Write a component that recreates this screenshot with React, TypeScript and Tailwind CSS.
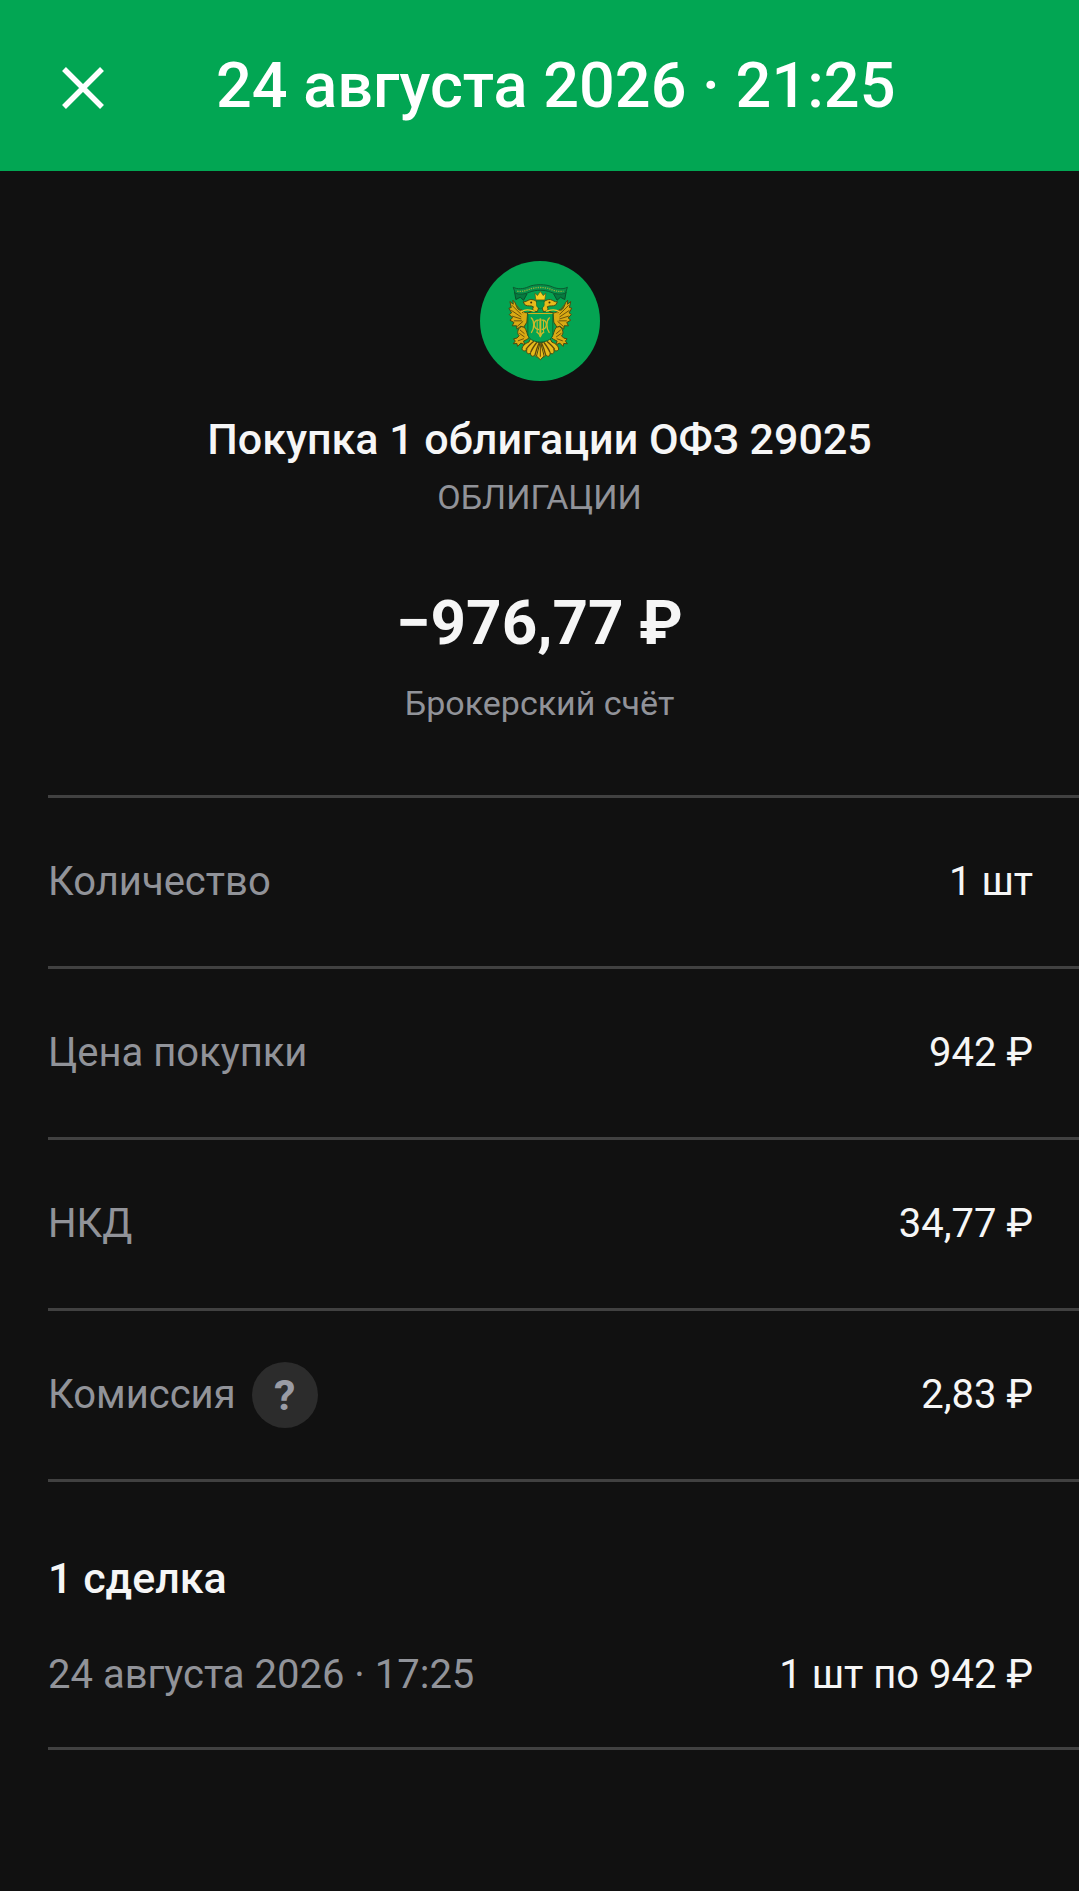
import { ReactNode } from "react";

const details = [
  { label: "Количество", value: "1 шт" },
  { label: "Цена покупки", value: "942 ₽" },
  { label: "НКД", value: "34,77 ₽" },
  { label: "Комиссия", value: "2,83 ₽", hint: true },
];

const CloseIcon = () => (
  <svg viewBox="0 0 42 42" className="size-[42px]" fill="none" aria-hidden="true">
    <path d="M2 2 40 40M40 2 2 40" stroke="currentColor" strokeWidth="5.5" />
  </svg>
);

// one half of the eagle, mirrored for the other side
const EagleHalf = () => (
  <g strokeLinejoin="round" strokeLinecap="round">
    {/* ribbon tail */}
    <path
      d="M131 126 L135 148 L148 141 L158 150 L168 132 Z"
      fill="#067a3f"
      stroke="#0b4f2a"
      strokeWidth="3"
    />
    {/* wing */}
    <path
      d="M181 184 C170 190 160 190 152 178 C144 184 138 174 133 158 L126 150 L127 162 L117 154 L121 172 L114 174 L122 188 L115 193 L125 203 L117 210 L129 217 L124 227 L137 227 L138 237 L150 228 L158 232 L168 216 L170 190 Z"
      fill="#d9aa14"
      stroke="#4a4a10"
      strokeWidth="3"
    />
    <path
      d="M124 166 L150 192 M122 181 L150 200 M124 198 L150 206 M130 212 L152 212 M140 228 L156 214 M136 164 L156 188"
      stroke="#6e520a"
      strokeWidth="3"
      fill="none"
    />
    {/* neck and head */}
    <path
      d="M198 184 C188 184 182 178 188 170 C180 164 172 170 162 164 L157 155 C165 156 170 150 178 148 C192 147 202 156 203 166 C204 174 202 180 198 184 Z"
      fill="#e6bb1b"
      stroke="#4a4a10"
      strokeWidth="3"
    />
    <circle cx="181" cy="157" r="3" fill="#3c3008" />
    <path d="M152 184 C166 174 180 180 190 183" stroke="#f0c828" strokeWidth="4" fill="none" />
    {/* leg and claw */}
    <path
      d="M150 230 C140 236 137 250 145 257 L138 264 L128 266 L133 273 L127 281 L138 280 L140 289 L150 279 L162 284 L158 273 L168 268 L175 263 C168 254 168 240 161 232 Z"
      fill="#d9aa14"
      stroke="#4a4a10"
      strokeWidth="3"
    />
    <path
      d="M148 240 L160 250 M146 250 L160 260 M142 272 L158 266"
      stroke="#6e520a"
      strokeWidth="3"
      fill="none"
    />
    {/* tail feathers */}
    <path
      d="M206 278 C196 278 190 270 180 264 L174 276 C162 280 154 288 153 297 C157 305 165 303 168 298 C165 309 172 315 179 308 C178 319 187 322 192 314 C194 322 200 322 203 316 Z"
      fill="#e6bb1b"
      stroke="#4a4a10"
      strokeWidth="3"
    />
    <path
      d="M188 274 C176 284 170 290 166 297 M197 278 C188 290 183 298 180 306 M204 280 C198 294 195 304 193 313"
      stroke="#5f480a"
      strokeWidth="4"
      fill="none"
    />
  </g>
);

const Emblem = () => (
  <svg
    viewBox="27 32 361 361"
    className="size-[120px]"
    role="img"
    aria-label="Министерство финансов"
  >
    <circle cx="207.5" cy="212.5" r="180.5" fill="#04a452" />
    <EagleHalf />
    <g transform="translate(417 0) scale(-1 1)">
      <EagleHalf />
    </g>
    <path
      d="M208.5 274 L197 318 L208.5 329 L220 318 Z"
      fill="#e6bb1b"
      stroke="#4a4a10"
      strokeWidth="3"
      strokeLinejoin="round"
    />
    <path d="M208.5 282 V320" stroke="#5f480a" strokeWidth="3" />
    {/* ribbon */}
    <path
      d="M127 111 C140 118 158 116 172 110 C190 101 226 101 245 110 C259 116 277 118 290 111 L284 129 C270 134 254 132 240 126 C222 118 194 118 176 126 C162 132 146 134 133 129 Z"
      fill="#07904a"
      stroke="#0b5a30"
      strokeWidth="3"
      strokeLinejoin="round"
    />
    <path
      d="M139 123 C152 125 164 122 176 117 C194 110 222 110 240 117 C252 122 264 125 278 123"
      fill="none"
      stroke="#8fb03a"
      strokeWidth="4"
      strokeDasharray="4 3"
    />
    {/* crown */}
    <path
      d="M195 149 L192 129 L200 136 L204 130 L208.5 124 L213 130 L217 136 L225 129 L222 149 Z"
      fill="#f5cf23"
      stroke="#5a5210"
      strokeWidth="2"
      strokeLinejoin="round"
    />
    <path
      d="M197 152 H220 V164 C220 170 214 174 208.5 176 C202 174 197 170 197 164 Z"
      fill="#069a4b"
      stroke="#0c6a34"
      strokeWidth="2"
    />
    {/* shield */}
    <path
      d="M171 189 H246 V250 C246 266 232 274 208.5 276 C185 274 171 266 171 250 Z"
      fill="#04a452"
      stroke="#0c6a34"
      strokeWidth="3"
    />
    <path d="M173 190 H244" stroke="#d9b51a" strokeWidth="3" strokeLinecap="round" />
    {/* monogram */}
    <g fill="none" stroke="#cdb92a" strokeLinecap="round">
      <path
        d="M181 203 C191 212 191 234 182 247 M236 203 C226 212 226 234 235 247"
        strokeWidth="4"
      />
      <path d="M203 210 C186 208 186 236 203 238 M214 210 C231 208 231 236 214 238" strokeWidth="4" />
      <path d="M208.5 207 V258" strokeWidth="6" />
      <path d="M199 210 V244 M218 210 V244" strokeWidth="3" />
      <path d="M198 246 C202 248 206 252 208.5 258 C211 252 215 248 219 246" strokeWidth="4" />
    </g>
  </svg>
);

const Row = ({
  label,
  value,
  children,
}: {
  label: string;
  value: string;
  children?: ReactNode;
}) => (
  <div className="flex items-center justify-between border-b-3 border-[#414141] h-[171px] pr-[46px]">
    <dt className="flex items-center gap-4 text-[#919399]">
      {label}
      {children}
    </dt>
    <dd>{value}</dd>
  </div>
);

export default function App() {
  return (
    <div className="min-h-screen bg-[#111111] text-[#f6f6f6] font-['Roboto',sans-serif] text-[40px] leading-12">
      <header className="flex items-center h-[171px] pt-1 pl-[62px] bg-[#02a653] text-white">
        <button type="button" aria-label="Закрыть">
          <CloseIcon />
        </button>
        <h1 className="pl-28 pb-1 text-[63px] leading-20 font-medium whitespace-nowrap">
          24 августа 2026 · 21:25
        </h1>
      </header>

      <main>
        <section className="flex flex-col items-center pt-[90px] pb-[70px] text-center">
          <Emblem />
          <h2 className="mt-8 text-[43px] leading-[52px] font-medium">
            Покупка 1 облигации ОФЗ 29025
          </h2>
          <p className="mt-2.5 text-[34px] leading-11 text-[#919399]">ОБЛИГАЦИИ</p>
          <p className="mt-[68px] text-[62px] leading-[72px] font-bold">−976,77 ₽</p>
          <p className="mt-[22px] text-[34px] leading-11 text-[#919399]">
            Брокерский счёт
          </p>
        </section>

        <dl className="ml-12 border-t-3 border-[#414141]">
          {details.map(({ label, value, hint }) => (
            <Row key={label} label={label} value={value}>
              {hint && (
                <button
                  type="button"
                  aria-label="Подробнее о комиссии"
                  className="size-[66px] rounded-full bg-[#2c2c2c] text-[43px] font-bold text-[#9a9ca5]"
                >
                  ?
                </button>
              )}
            </Row>
          ))}
        </dl>

        <section className="ml-12 pt-[70px] pb-12 pr-[46px] border-b-3 border-[#414141]">
          <h3 className="text-[43px] leading-[52px] font-medium">1 сделка</h3>
          <div className="flex justify-between mt-[47px]">
            <span className="text-[#919399]">24 августа 2026 · 17:25</span>
            <span>1 шт по 942 ₽</span>
          </div>
        </section>
      </main>
    </div>
  );
}
